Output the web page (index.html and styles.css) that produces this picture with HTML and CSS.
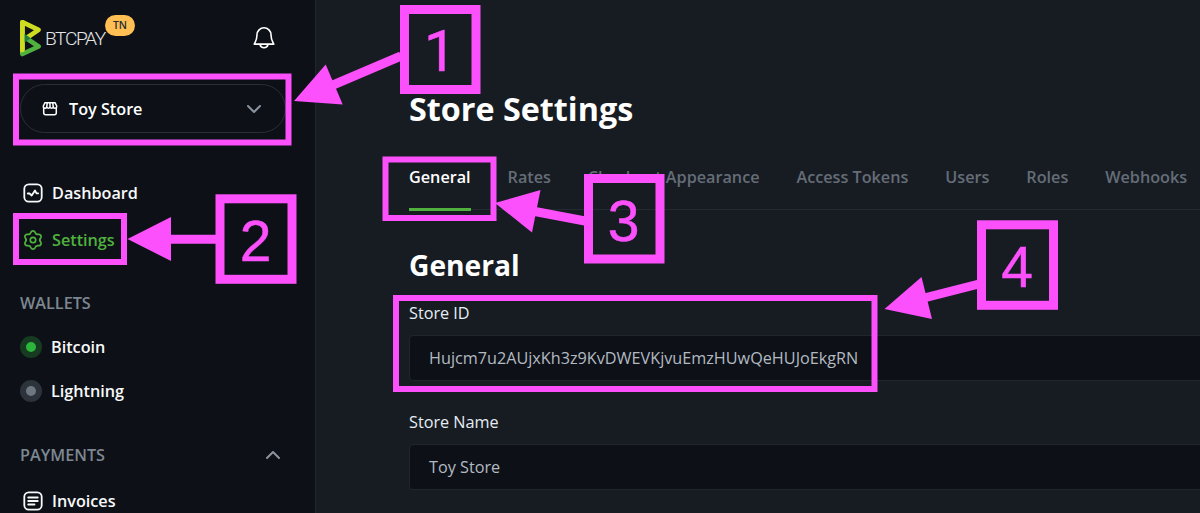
FILE: index.html
```html
<!DOCTYPE html>
<html lang="en">
<head>
<meta charset="utf-8">
<title>Store Settings</title>
<link rel="stylesheet" href="styles.css">
</head>
<body>
<div class="app">
  <aside class="sidebar">
    <header class="brand">
      <svg class="logo" width="22" height="38" viewBox="0 0 22 38" fill="none" stroke-width="4.6" stroke-linecap="round" stroke-linejoin="round">
        <path d="M2.4 34V3.200L18.600 10.800L6.500 19" stroke="#cedc21"/>
        <path d="M6 19L18.600 27.500L2.400 35" stroke="#51b13e"/>
        <path d="M2.400 3.200V31" stroke="#cedc21"/>
        <path d="M4.600 14.800L10.600 19.200L4.600 23.600Z" fill="#1e7a44"/>
      </svg>
      <span class="wordmark">BTCPAY</span>
      <span class="badge">TN</span>
      <svg class="bell" width="24" height="26" viewBox="0 0 24 26" fill="none" stroke="#fff" stroke-width="1.6" stroke-linecap="round" stroke-linejoin="round">
        <path d="M5 8.8a7 7 0 0 1 14 0c0 5.500 1.600 7.200 2.800 9.300H2.200C3.400 16 5 14.300 5 8.800Z"/>
        <path d="M8 18.500a4.100 4.100 0 0 0 8 0"/>
      </svg>
    </header>
    <div class="selector">
      <svg width="16" height="16" viewBox="0 0 16 16" fill="none" stroke="#fff" stroke-width="1.500" stroke-linejoin="round">
        <path d="M1.700 6.500V11.800a2 2 0 0 0 2 2h8.600a2 2 0 0 0 2-2V6.500"/>
        <path d="M3 1.700h10l1.700 3.300v.6a1.700 1.700 0 0 1-3.500 0 1.600 1.600 0 0 1-3.200 0 1.600 1.600 0 0 1-3.200 0 1.700 1.700 0 0 1-3.500 0V5ZM8 2v3.600M5.200 2l-.4 3.600M10.800 2l.4 3.600"/>
      </svg>
      <span class="selector-name">Toy Store</span>
      <svg width="16" height="10" viewBox="0 0 16 10" fill="none" stroke="#8b949e" stroke-width="2" stroke-linecap="round" stroke-linejoin="round"><path d="M2 2l6 6 6-6"/></svg>
    </div>
    <nav class="nav">
      <a class="item">
        <svg width="20" height="20" viewBox="0 0 20 20" fill="none" stroke="currentColor" stroke-width="1.800" stroke-linecap="round" stroke-linejoin="round"><rect x="1.300" y="1.300" width="17.400" height="17.400" rx="4.500"/><path d="M4.800 10.500h1.700l2.200 2 3.300-5 1.500 2.800h1.700"/></svg>
        Dashboard
      </a>
      <a class="item active">
        <svg width="20" height="22" viewBox="-10 -11 20 22" fill="none" stroke="currentColor" stroke-width="1.700" stroke-linejoin="round"><path d="M-2-7.800A2.200 2.200 0 0 1 2-7.800Q2.900-5.020 5.750-5.630A2.200 2.200 0 0 1 7.750-2.170Q5.800 0 7.750 2.170A2.200 2.200 0 0 1 5.750 5.630Q2.900 5.020 2 7.800A2.200 2.200 0 0 1-2 7.800Q-2.900 5.020-5.750 5.630A2.200 2.200 0 0 1-7.750 2.170Q-5.800 0-7.750-2.170A2.200 2.200 0 0 1-5.750-5.630Q-2.900-5.020-2-7.800Z"/><circle r="2.700"/></svg>
        Settings
      </a>
      <h4 class="section">WALLETS</h4>
      <a class="item wallet"><span class="dot on"></span>Bitcoin</a>
      <a class="item wallet"><span class="dot"></span>Lightning</a>
      <h4 class="section payments">PAYMENTS
        <svg width="16" height="10" viewBox="0 0 16 10" fill="none" stroke="#8b949e" stroke-width="2" stroke-linecap="round" stroke-linejoin="round"><path d="M2 8l6-6 6 6"/></svg>
      </h4>
      <a class="item">
        <svg width="20" height="20" viewBox="0 0 20 20" fill="none" stroke="currentColor" stroke-width="1.800" stroke-linecap="round" stroke-linejoin="round"><rect x="1.300" y="1.300" width="17.400" height="17.400" rx="4.500"/><path d="M5.200 6.500h9.600M5.200 10h9.600M5.200 13.500h6.300"/></svg>
        Invoices
      </a>
    </nav>
  </aside>
  <main class="main">
    <h1 class="title">Store Settings</h1>
    <div class="tabs">
      <a class="tab current">General</a><a class="tab">Rates</a><a class="tab">Checkout Appearance</a><a class="tab">Access Tokens</a><a class="tab">Users</a><a class="tab">Roles</a><a class="tab">Webhooks</a>
    </div>
    <h3 class="subtitle">General</h3>
    <div class="field"><label>Store ID</label><div class="input store-id">Hujcm7u2AUjxKh3z9KvDWEVKjvuEmzHUwQeHUJoEkgRN</div></div>
    <div class="field"><label>Store Name</label><div class="input">Toy Store</div></div>
  </main>
  <svg class="annotations" width="1200" height="513" viewBox="0 0 1200 513">
    <g class="frames">
      <rect x="16" y="76.500" width="272.500" height="66"/>
      <rect x="16" y="216" width="108" height="46"/>
      <rect x="385.500" y="159.500" width="108" height="58.500"/>
      <rect x="396" y="298" width="478.500" height="91"/>
    </g>
    <g class="boxes">
      <rect x="404.500" y="9.500" width="71.500" height="80"/>
      <rect x="220" y="198.800" width="72" height="80.500"/>
      <rect x="588.500" y="178.500" width="71.500" height="80.500"/>
      <rect x="981.500" y="224.800" width="72" height="80.500"/>
      <path d="M401 56L333 85M217 239.300H168M585 221L535 211.500M979 284L926 297.500"/>
    </g>
    <g class="heads">
      <path d="M294 101L325.700 64.500L342.700 104.500Z"/>
      <path d="M127.500 239L171 217V261Z"/>
      <path d="M495 203L540.500 190L532 232.500Z"/>
      <path d="M884.500 309L921.500 277L932 319Z"/>
    </g>
    <g class="digits">
      <text class="one" x="440" y="71">1</text><text x="255.500" y="260.500">2</text><text x="623.500" y="241">3</text><text x="1017" y="287">4</text>
    </g>
  </svg>
</div>
</body>
</html>
```
FILE: styles.css
```css
* { box-sizing: border-box; }
body { margin: 0; overflow: hidden; background: #171c22; color: #fff; font: 16.22px/24px "Open Sans", "Noto Sans", sans-serif; }
h1, h3, h4 { margin: 0; }
svg { display: block; flex: none; }
.app { position: relative; display: flex; width: 1200px; height: 513px; overflow: hidden; }
.sidebar { flex: none; width: 316px; padding: 0 29px 0 20px; background: #0d1117; border-right: 1px solid #20252c; }
.brand { display: flex; height: 84px; padding-top: 19px; }
.wordmark { margin: 8px 0 0 3px; width: 61px; color: #e4e5e6; font: 300 19.2px/24px Roboto, sans-serif; letter-spacing: -1.4px; white-space: nowrap; }
.badge { width: 30px; height: 21px; margin: -4px 0 0 -1px; border-radius: 11px; background: #ffbf52; color: #292d33; font-size: 10.5px; font-weight: 600; line-height: 21px; text-align: center; }
.bell { margin: 7px 10px 0 auto; }
.selector { display: flex; align-items: center; width: 266px; height: 49px; padding: 0 23px 0 21px; border: 1px solid #292f36; border-radius: 25px; font-weight: 600; }
.selector-name { flex: 1; margin-left: 11px; }
.nav { padding-top: 37px; }
.item { display: flex; align-items: center; gap: 9px; height: 46.5px; padding-left: 3px; font-weight: 600; color: #f8f9fa; }
.item.active { color: #51b13e; }
.section { display: flex; align-items: center; justify-content: space-between; height: 44px; margin-top: 18px; font-size: 16.22px; font-weight: 600; color: #7d8791; }
.nav .section:not(.payments) { margin-top: 17.9px; }
.payments { margin-top: 20.1px; padding-right: 5px; }
.wallet { height: 44px; padding-left: 0; }
.dot { width: 22px; height: 22px; border: 6px solid #2d333b; border-radius: 50%; background: #6e7681; }
.dot.on { border-color: #173b20; background: #2cb53d; }
.payments + .item { height: 48px; }
.main { flex: 1; min-width: 0; padding: 84px 0 0 93px; }
.title { height: 49px; font-size: 32.3px; line-height: 48px; font-weight: 700; white-space: nowrap; }
.tabs { display: flex; gap: 36.9px; width: 900px; height: 77px; padding-top: 32px; border-bottom: 1px solid #242a31; font-weight: 600; color: #656d78; white-space: nowrap; }
.tab { height: 46px; }
.current { color: #fff; border-bottom: 3px solid #51b13e; }
.subtitle { height: 40px; margin-top: 35px; font-size: 28.2px; line-height: 40px; font-weight: 700; }
.field { height: 109px; padding-top: 15px; }
.subtitle + .field { height: 110px; padding-top: 16px; }
.field label { display: block; height: 34px; color: #e6edf3; }
.input { width: 900px; height: 46px; padding: 0 19px; border: 1px solid #20262d; border-radius: 4px; background: #0d1117; color: #b3bac2; line-height: 44px; white-space: nowrap; }
.annotations { position: absolute; inset: 0; }
.frames, .boxes { fill: none; stroke: #fc50fc; stroke-width: 6; }
.boxes { stroke-width: 9; }
.heads, .digits { fill: #fc50fc; }
.digits { font: 57px "Liberation Sans", Arial, sans-serif; text-anchor: middle; stroke: #fc50fc; stroke-width: .5; }
.one { font-family: Roboto, sans-serif; }
```
